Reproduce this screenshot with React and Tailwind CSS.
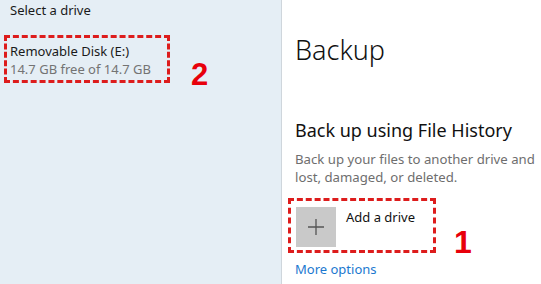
import React from 'react';

const font = { fontFamily: '"Noto Sans", "Open Sans", sans-serif' };
const digit = { fontFamily: '"Liberation Sans", Arial, sans-serif' };

export default function App() {
  return (
    <div className="flex h-[284px] w-[541px] overflow-hidden bg-white" style={font}>
      {/* left: drive picker */}
      <div className="flex w-[282px] shrink-0 flex-col border-r border-[#cfd6dc] bg-[#e5eef5]">
        <div className="pl-[10px] pt-[1px] text-[13px] leading-[18px] text-[#1a1a1a]">Select a drive</div>
        <div className="mt-[16px] flex items-start">
          <div className="ml-[4px] h-[48px] w-[166px] border-[3px] border-dashed border-[#dd1c1c] pl-[3px] pt-[4px]">
            <div className="text-[13px] leading-[18px] text-[#1a1a1a]">Removable Disk (E:)</div>
            <div className="text-[13px] leading-[18px] text-[#737373]">14.7 GB free of 14.7 GB</div>
          </div>
          <div className="ml-[21px] mt-[24px] text-[31px] font-bold leading-none text-[#e8000b]" style={digit}>2</div>
        </div>
      </div>

      {/* right: backup settings */}
      <div className="flex flex-1 flex-col pl-[13px]">
        <div className="mt-[33px] text-[27px] font-light leading-[34px] text-[#111]">Backup</div>
        <div className="mt-[51px] text-[18px] leading-[24px] text-[#111]">Back up using File History</div>
        <div className="mt-[8px] whitespace-nowrap text-[13.2px] leading-[18px] text-[#6e6e6e]">
          Back up your files to another drive and
          <br />
          lost, damaged, or deleted.
        </div>
        <div className="mt-[12px] flex items-start">
          <div className="-ml-[7px] flex h-[55px] w-[148px] border-[3px] border-dashed border-[#dd1c1c] pl-[5px] pt-[6px]">
            <div className="flex h-[40px] w-[40px] items-center justify-center bg-[#c9c9c9]">
              <svg width="18" height="18" viewBox="0 0 18 18">
                <path d="M9 1v16M1 9h16" stroke="#555" strokeWidth="1.3" fill="none" />
              </svg>
            </div>
            <div className="ml-[10px] mt-[1px] text-[13px] leading-[18px] text-[#111]">Add a drive</div>
          </div>
          <div className="ml-[18px] mt-[28px] text-[32px] font-bold leading-none text-[#e8000b]" style={digit}>1</div>
        </div>
        <div className="mt-[2px] text-[13px] leading-[18px] text-[#1b78cf]">More options</div>
      </div>
    </div>
  );
}
